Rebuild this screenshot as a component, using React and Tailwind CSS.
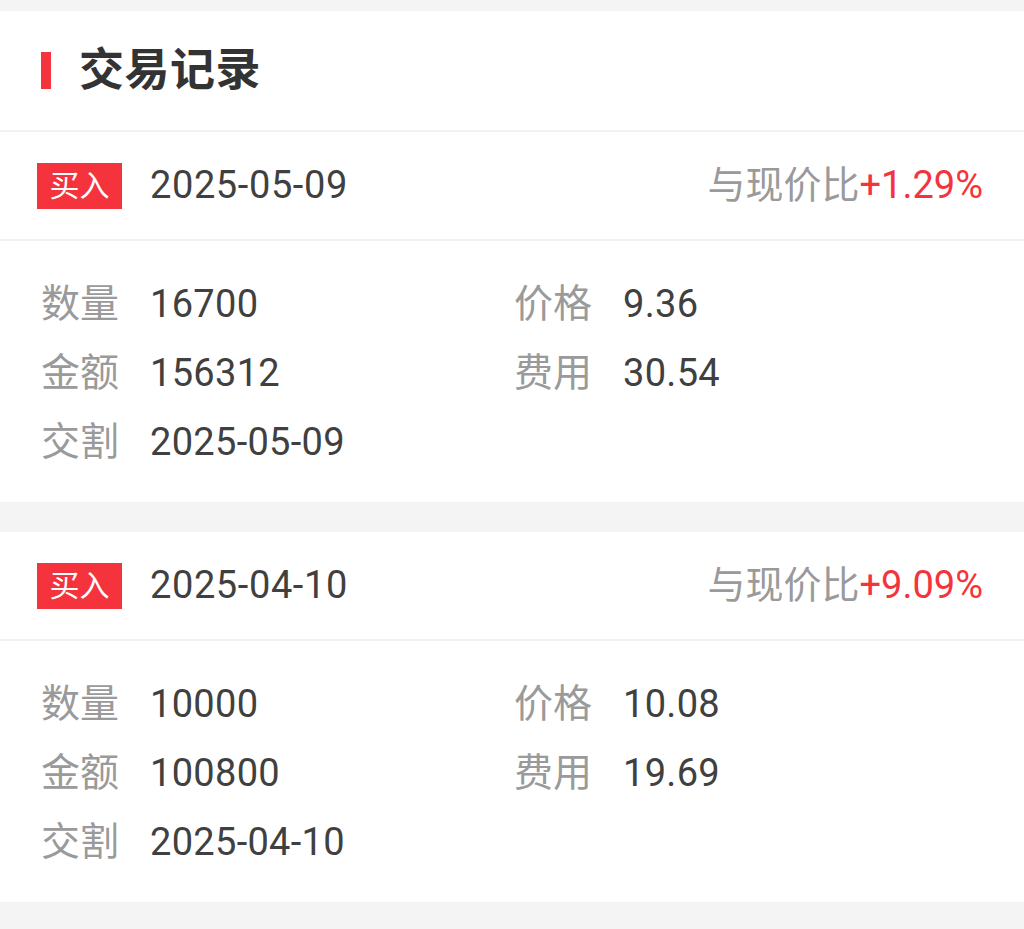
import React from "react";

const records = [
  {
    date: "2025-05-09",
    diff: "+1.29%",
    qty: "16700",
    price: "9.36",
    amount: "156312",
    fee: "30.54",
    settle: "2025-05-09",
  },
  {
    date: "2025-04-10",
    diff: "+9.09%",
    qty: "10000",
    price: "10.08",
    amount: "100800",
    fee: "19.69",
    settle: "2025-04-10",
  },
];

const font = { fontFamily: 'Roboto, "Noto Sans CJK SC", sans-serif' };

function Field({ label, value }) {
  return (
    <div className="flex items-center h-[69px]">
      <span className="text-[39px] text-[#9a9a9a] w-[109px] shrink-0">{label}</span>
      <span className="text-[38px] text-[#404040] tracking-[0.3px]">{value}</span>
    </div>
  );
}

function Record({ r }) {
  return (
    <div>
      {/* Top line: tag, date, compare */}
      <div className="flex items-center h-[109px] pl-[37px] pr-[41px] border-b-2 border-[#f1f1f1]">
        <span className="w-[85px] h-[46px] bg-[#f4333d] text-white text-[30px] flex items-center justify-center">
          买入
        </span>
        <span className="ml-[28px] text-[38px] text-[#404040] tracking-[0.6px]">{r.date}</span>
        <div className="ml-auto text-[38px]">
          <span className="text-[#9a9a9a]">与现价比</span>
          <span className="text-[#f4333d]">{r.diff}</span>
        </div>
      </div>

      {/* Details */}
      <div className="grid grid-cols-2 pl-[41px] pr-[41px] pt-[29px] pb-[25px]">
        <Field label="数量" value={r.qty} />
        <div className="pl-[2px]">
          <Field label="价格" value={r.price} />
        </div>
        <Field label="金额" value={r.amount} />
        <div className="pl-[2px]">
          <Field label="费用" value={r.fee} />
        </div>
        <Field label="交割" value={r.settle} />
      </div>
    </div>
  );
}

export default function App() {
  return (
    <div className="min-h-[929px] bg-[#f4f4f4] pt-[11px]" style={font}>
      <div className="bg-white">
        {/* Header */}
        <div className="flex items-center h-[121px] pl-[41px] border-b-2 border-[#f1f1f1]">
          <span className="w-[10px] h-[37px] bg-[#f4333d]" />
          <h1 className="ml-[28px] text-[45px] font-bold text-[#333333] tracking-[0.5px]">交易记录</h1>
        </div>
        <Record r={records[0]} />
      </div>

      <div className="bg-white mt-[30px]">
        <Record r={records[1]} />
      </div>
    </div>
  );
}
